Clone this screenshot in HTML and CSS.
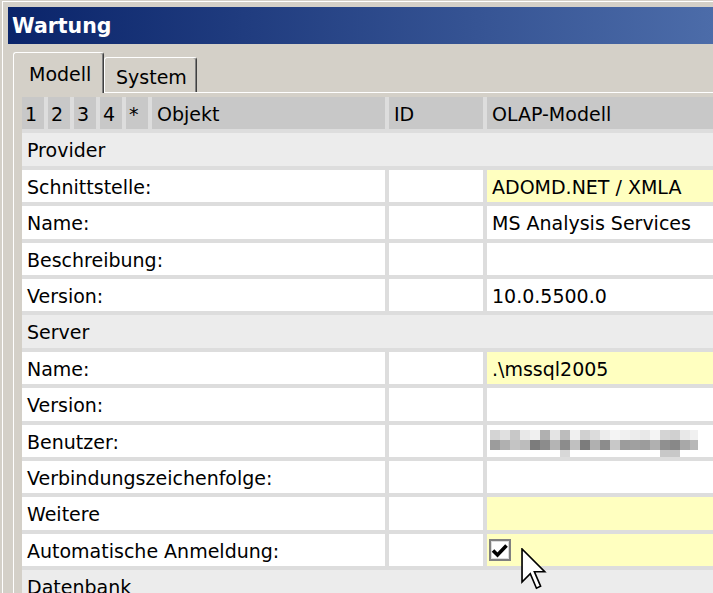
FILE: index.html
```html
<!DOCTYPE html>
<html lang="de">
<head>
  <meta charset="UTF-8" />
  <title>Wartung</title>
  <link rel="stylesheet" href="styles.css">
</head>
<body>

  <div class="window">
    <div class="titlebar">Wartung</div>

    <div class="tabs">
      <div class="tab active">Modell</div>
      <div class="tab">System</div>
    </div>

    <div class="panel">
      <div class="grid">
        <div class="hd num">1</div>
        <div class="hd num">2</div>
        <div class="hd num">3</div>
        <div class="hd num">4</div>
        <div class="hd num">*</div>
        <div class="hd">Objekt</div>
        <div class="hd">ID</div>
        <div class="hd">OLAP-Modell</div>

        <div class="section">Provider</div>
        <div class="label">Schnittstelle:</div><div class="cell"></div><div class="cell edit">ADOMD.NET / XMLA</div>
        <div class="label">Name:</div><div class="cell"></div><div class="cell">MS Analysis Services</div>
        <div class="label">Beschreibung:</div><div class="cell"></div><div class="cell"></div>
        <div class="label">Version:</div><div class="cell"></div><div class="cell">10.0.5500.0</div>

        <div class="section">Server</div>
        <div class="label">Name:</div><div class="cell"></div><div class="cell edit">.\mssql2005</div>
        <div class="label">Version:</div><div class="cell"></div><div class="cell"></div>
        <div class="label">Benutzer:</div><div class="cell"></div><div class="cell"><div class="mosaic"></div></div>
        <div class="label">Verbindungszeichenfolge:</div><div class="cell"></div><div class="cell"></div>
        <div class="label">Weitere</div><div class="cell"></div><div class="cell edit"></div>
        <div class="label">Automatische Anmeldung:</div><div class="cell"></div>
        <div class="cell edit check">
          <span class="checkbox">
            <svg viewBox="0 0 18 18" width="18" height="18"><path d="M2 9.5 L6.5 14 L15.5 4.5" fill="none" stroke="#000" stroke-width="3.6"/></svg>
          </span>
          <svg class="cursor" viewBox="0 0 13 21" width="26.8" height="43.3">
            <path d="M0.5 0.5 L0.5 16.5 L4.5 12.5 L7.5 19.5 L9.5 18.5 L6.5 11.5 L11.5 11.5 Z" fill="#fff" stroke="#000" stroke-width="0.8" stroke-linejoin="miter"/>
          </svg>
        </div>

        <div class="section">Datenbank</div>
      </div>
    </div>
  </div>

</body>
</html>
```

FILE: styles.css
```css
* {
  margin: 0;
  padding: 0;
  box-sizing: border-box;
}

html, body {
  overflow: hidden;
  background: #d4d0c8;
  font-family: "DejaVu Sans", Verdana, sans-serif;
  font-size: 19px;
  color: #000;
}

.window {
  width: 900px;
  margin: 1px 0 0 2px;
  border-top: 1px solid #fff;
  border-left: 1px solid #fff;
  padding: 5px 0 0 5px;
}

.titlebar {
  height: 37px;
  padding: 2px 0 0 4px;
  line-height: 35px;
  font-size: 20.5px;
  font-weight: bold;
  color: #fff;
  background: linear-gradient(to right, #0a246a 0, #4c6ca9 705px, #5a7ab4 900px);
}

/* tabs */
.tabs {
  display: flex;
  align-items: flex-end;
  height: 40px;
  margin: 8px 0 0 5px;
}

.tab {
  height: 35px;
  width: 93px;
  padding: 3px 0 0 11px;
  line-height: 32px;
  border-top: 1px solid #fff;
  border-left: 1px solid #fff;
  border-right: 1px solid #404040;
  border-radius: 3px 3px 0 0;
  box-shadow: inset -1px 0 #808080;
}

.tab.active {
  position: relative;
  z-index: 1;
  height: 41px;
  width: 91px;
  margin-bottom: -1px;
  padding: 2px 0 0 15px;
  line-height: 38px;
  background: #d4d0c8;
}

.panel {
  margin-left: 5px;
  border-top: 1px solid #fff;
  border-left: 1px solid #fff;
  padding: 4px 0 0 8px;
}

/* grid */
.grid {
  display: grid;
  grid-template-columns: repeat(5, 22px) 233px 94px 300px;
  grid-auto-rows: 32.4px;
  gap: 4px;
  background: #dddddd;
}

.grid > div {
  padding: 2px 0 0 5px;
  line-height: 30.4px;
  white-space: nowrap;
  overflow: hidden;
}

.hd {
  background: #c8c8c8;
}

.grid > .hd.num {
  padding-left: 3px;
}

.section {
  grid-column: 1 / -1;
  background: #ececec;
}

.label {
  grid-column: 1 / 7;
  background: #fff;
}

.cell {
  background: #fff;
}

.cell.edit {
  background: #ffffc0;
}

.grid > .cell.check {
  position: relative;
  display: flex;
  align-items: center;
  padding: 0 0 0 2px;
  overflow: visible;
}

.checkbox {
  display: flex;
  width: 22px;
  height: 22px;
  border: 2px solid #808080;
  background: #fff;
  box-shadow: inset 0 0 0 1px #dcdcdc;
}

.cursor {
  position: absolute;
  left: 33.7px;
  top: 13.9px;
  z-index: 2;
}

/* pixelated user name */
.mosaic {
  width: 208px;
  height: 28px;
  margin: 3px 0 0 -2px;
  background:
    linear-gradient(to right,
      #d4d4d4 0 10px, #e0e0e0 10px 20px, #c8c8c8 20px 30px, #e8e8e8 30px 40px,
      #f0f0f0 40px 50px, #b0b0b0 50px 60px, #e4e4e4 60px 70px, #bcbcbc 70px 80px,
      #f0f0f0 80px 90px, #d0d0d0 90px 100px, #dcdcdc 100px 110px, #ececec 110px 120px,
      #f4f4f4 120px 130px, #f0f0f0 130px 140px, #ececec 140px 150px, #e8e8e8 150px 160px,
      #f4f4f4 160px 170px, #d4d4d4 170px 180px, #d0d0d0 180px 190px, #e8e8e8 190px 200px,
      #f0f0f0 200px 208px) 0 0 / 100% 10px no-repeat,
    linear-gradient(to right,
      #9c9c9c 0 10px, #b0b0b0 10px 20px, #c4c4c4 20px 30px, #bcbcbc 30px 40px,
      #7c7c7c 40px 50px, #8c8c8c 50px 60px, #b4b4b4 60px 70px, #8c8c8c 70px 80px,
      #c0c0c0 80px 90px, #7c7c7c 90px 100px, #b0b0b0 100px 110px, #8c8c8c 110px 120px,
      #c8c8c8 120px 130px, #9c9c9c 130px 140px, #a0a0a0 140px 150px, #9c9c9c 150px 160px,
      #b0b0b0 160px 170px, #909090 170px 180px, #888888 180px 190px, #a8a8a8 190px 200px,
      #b8b8b8 200px 208px) 0 10px / 100% 10px no-repeat,
    linear-gradient(to right,
      transparent 0 70px, #d8d8d8 70px 80px, transparent 80px 170px,
      #c8c8c8 170px 190px, transparent 190px) 0 20px / 100% 8px no-repeat;
}
```
